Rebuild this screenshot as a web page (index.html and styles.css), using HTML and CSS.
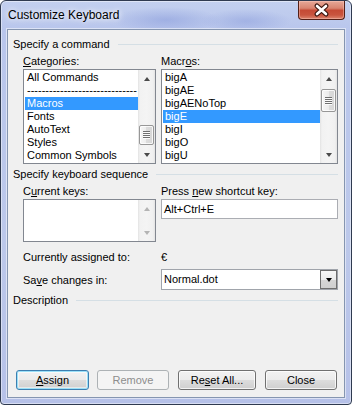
FILE: index.html
```html
<!DOCTYPE html>
<html>
<head>
  <title>Customize Keyboard</title>
  <meta charset="UTF-8">
  <link rel="stylesheet" href="styles.css">
</head>
<body>
  <div class="window">
    <div class="titlebar">
      <span class="title">Customize Keyboard</span>
      <div class="close-btn">
        <svg width="45" height="18" viewBox="0 0 45 18">
          <path d="M18 5 L27 13 M27 5 L18 13" stroke="#3b1710" stroke-width="5" stroke-linecap="round"/>
          <path d="M18 5 L27 13 M27 5 L18 13" stroke="#ffffff" stroke-width="2.6" stroke-linecap="round"/>
        </svg>
      </div>
    </div>

    <div class="client">
      <div class="group-head"><span>Specify a command</span></div>

      <div class="pair labels">
        <label><u>C</u>ategories:</label>
        <label>Macr<u>o</u>s:</label>
      </div>

      <div class="pair lists">
        <div class="listbox tall">
          <ul class="items">
            <li>All Commands</li>
            <li>------------------------------</li>
            <li class="sel">Macros</li>
            <li>Fonts</li>
            <li>AutoText</li>
            <li>Styles</li>
            <li>Common Symbols</li>
          </ul>
          <div class="vscroll">
            <div class="arrow"><span class="tri up"></span></div>
            <div class="track end"><div class="thumb cat"><span class="grip"></span></div></div>
            <div class="arrow"><span class="tri down"></span></div>
          </div>
        </div>
        <div class="listbox tall">
          <ul class="items">
            <li>bigA</li>
            <li>bigAE</li>
            <li>bigAENoTop</li>
            <li class="sel">bigE</li>
            <li>bigI</li>
            <li>bigO</li>
            <li>bigU</li>
          </ul>
          <div class="vscroll">
            <div class="arrow"><span class="tri up"></span></div>
            <div class="track"><div class="thumb mac"><span class="grip"></span></div></div>
            <div class="arrow"><span class="tri down"></span></div>
          </div>
        </div>
      </div>

      <div class="group-head second"><span>Specify keyboard sequence</span></div>

      <div class="pair labels">
        <label>C<u>u</u>rrent keys:</label>
        <label>Press <u>n</u>ew shortcut key:</label>
      </div>

      <div class="pair keys">
        <div class="listbox short">
          <ul class="items"></ul>
          <div class="vscroll">
            <div class="arrow"><span class="tri up off"></span></div>
            <div class="track"></div>
            <div class="arrow"><span class="tri down off"></span></div>
          </div>
        </div>
        <div class="textbox">Alt+Ctrl+E</div>
      </div>

      <div class="pair assigned">
        <span>Currently assigned to:</span>
        <span>€</span>
      </div>

      <div class="pair save">
        <label>Sa<u>v</u>e changes in:</label>
        <div class="combo">
          <span class="combo-text">Normal.dot</span>
          <span class="combo-btn"><span class="tri down dark"></span></span>
        </div>
      </div>

      <div class="group-head third"><span>Description</span></div>

      <div class="buttons">
        <button class="btn default"><u>A</u>ssign</button>
        <button class="btn" disabled>Remove</button>
        <button class="btn wide">Re<u>s</u>et All...</button>
        <button class="btn">Close</button>
      </div>
    </div>
  </div>
</body>
</html>
```

FILE: styles.css
```css
* {
  box-sizing: border-box;
}

body {
  margin: 0;
  font-family: "Liberation Sans", Arial, sans-serif;
  font-size: 11px;
  color: #000;
}

/* Window frame */
.window {
  width: 352px;
  height: 405px;
  border: 1px solid #2f3a50;
  border-radius: 6px 6px 4px 4px;
  overflow: hidden;
  display: flex;
  flex-direction: column;
  background:
    radial-gradient(ellipse 55px 13px at 165px 19px, rgba(125, 145, 215, 0.45), transparent),
    radial-gradient(ellipse 45px 12px at 245px 20px, rgba(125, 145, 215, 0.4), transparent),
    linear-gradient(180deg, #c3d0ef 0, #b9c6ec 28px, #bcc8ea 60%, #b6c1e8 100%);
  box-shadow: inset 0 0 0 1px rgba(255, 255, 255, 0.45);
}

.titlebar {
  height: 28px;
  flex-shrink: 0;
  display: flex;
  justify-content: space-between;
  align-items: flex-start;
  padding: 0 6px 0 7px;
}

.title {
  font-size: 12px;
  line-height: 15px;
  padding-top: 7px;
  text-shadow: 0 0 5px #fff, 0 0 9px rgba(255, 255, 255, 0.8);
}

.close-btn {
  width: 47px;
  height: 19px;
  border: 1px solid #531f16;
  border-top: none;
  border-radius: 0 0 4px 4px;
  background: linear-gradient(180deg, #e7a898 0%, #d98470 40%, #c54a35 52%, #c9553f 78%, #dc8670 100%);
  box-shadow: inset 0 0 0 1px rgba(255, 210, 200, 0.4);
  display: flex;
  align-items: center;
  justify-content: center;
}

/* Client area */
.client {
  margin: 0 6px;
  height: 369px;
  flex-shrink: 0;
  border: 1px solid #8595b0;
  box-shadow: 0 0 0 1px rgba(255, 255, 255, 0.5);
  background: #f0f0f0;
  padding: 8px 6px 0 5px;
  display: flex;
  flex-direction: column;
}

.group-head {
  display: flex;
  align-items: center;
  height: 13px;
  line-height: 13px;
}

.group-head::after {
  content: "";
  flex: 1;
  border-top: 1px solid #d5dfe5;
  margin-left: 8px;
}

.group-head.second {
  margin-top: 4px;
}

.group-head.third {
  margin-top: 4px;
}

.pair {
  display: grid;
  grid-template-columns: 133px 177px;
  column-gap: 5px;
  padding-left: 10px;
}

.labels {
  margin-top: 4px;
  line-height: 13px;
}

.lists {
  margin-top: 1px;
}

.keys {
  margin-top: 1px;
  align-items: start;
}

.assigned {
  margin-top: 9px;
  line-height: 13px;
}

.save {
  margin-top: 5px;
  align-items: center;
}

/* List boxes */
.listbox {
  border: 1px solid #828790;
  background: #fff;
  display: flex;
}

.listbox.tall {
  height: 95px;
}

.listbox.short {
  height: 43px;
}

.items {
  flex: 1;
  list-style: none;
  margin: 0;
  padding: 1px 0 0 1px;
  overflow: hidden;
}

.items li {
  height: 13px;
  line-height: 13px;
  padding-left: 2px;
  white-space: nowrap;
}

.items li.sel {
  background: #3399ff;
  color: #fff;
}

/* Scroll bars */
.vscroll {
  width: 17px;
  flex-shrink: 0;
  display: flex;
  flex-direction: column;
  background: linear-gradient(90deg, #e3e3e3 0, #f2f2f2 2px, #f4f4f4 50%, #f0f0f0 15px, #e3e3e3 100%);
}

.arrow {
  height: 17px;
  flex-shrink: 0;
  display: flex;
  align-items: center;
  justify-content: center;
}

.track {
  flex: 1;
  display: flex;
  flex-direction: column;
  padding: 0 1px;
}

.track.end {
  justify-content: flex-end;
  padding-bottom: 1px;
}

.thumb {
  border: 1px solid #979797;
  border-radius: 2px;
  background: linear-gradient(90deg, #f6f6f6 0, #ececec 50%, #dcdcdc 50%, #d6d6d6 100%);
  box-shadow: inset 0 0 0 1px rgba(255, 255, 255, 0.8);
  display: flex;
  align-items: center;
  justify-content: center;
}

.thumb.cat {
  height: 20px;
}

.thumb.mac {
  height: 23px;
  margin-top: 2px;
}

.grip {
  width: 7px;
  height: 8px;
  background: repeating-linear-gradient(180deg, #6f6f6f 0 1px, #fbfbfb 1px 2px);
}

.tri {
  width: 0;
  height: 0;
  border-left: 3.5px solid transparent;
  border-right: 3.5px solid transparent;
}

.tri.up {
  border-bottom: 4px solid #4a4a4a;
}

.tri.down {
  border-top: 4px solid #4a4a4a;
}

.tri.up.off {
  border-bottom-color: #b4b4b4;
}

.tri.down.off {
  border-top-color: #b4b4b4;
}

.tri.down.dark {
  border-top-color: #000;
}

/* Edit and combo */
.textbox {
  height: 20px;
  border: 1px solid #abadb3;
  background: #fff;
  padding-left: 2px;
  line-height: 18px;
}

.combo {
  height: 21px;
  border: 1px solid #a0a4ab;
  background: #fff;
  display: flex;
  align-items: stretch;
}

.combo-text {
  flex: 1;
  padding-left: 2px;
  line-height: 19px;
}

.combo-btn {
  width: 17px;
  border: 1px solid #6e6e6e;
  background: linear-gradient(180deg, #f8f8f8 0, #ececec 50%, #d6d6d6 51%, #cfcfcf 100%);
  display: flex;
  align-items: center;
  justify-content: center;
}

/* Bottom buttons */
.buttons {
  margin-top: 63px;
  padding-left: 3px;
  display: flex;
  gap: 9px;
}

.btn {
  width: 72px;
  height: 20px;
  padding: 0;
  border: 1px solid #707070;
  border-radius: 3px;
  background: linear-gradient(180deg, #f2f2f2 0%, #ebebeb 50%, #dddddd 50%, #cfcfcf 100%);
  box-shadow: inset 0 0 0 1px rgba(255, 255, 255, 0.75);
  font-family: "Liberation Sans", Arial, sans-serif;
  font-size: 11px;
  color: #000;
}

.btn.default {
  width: 73px;
  margin-right: -1px;
  border-color: #3c7fb1;
  box-shadow: inset 0 0 0 1px #9be0f8, inset 0 0 0 2px rgba(255, 255, 255, 0.5);
}

.btn.wide {
  width: 78px;
}

.btn:disabled {
  border-color: #adb2b5;
  background: #f4f4f4;
  color: #8d8d8d;
  box-shadow: none;
}
```
